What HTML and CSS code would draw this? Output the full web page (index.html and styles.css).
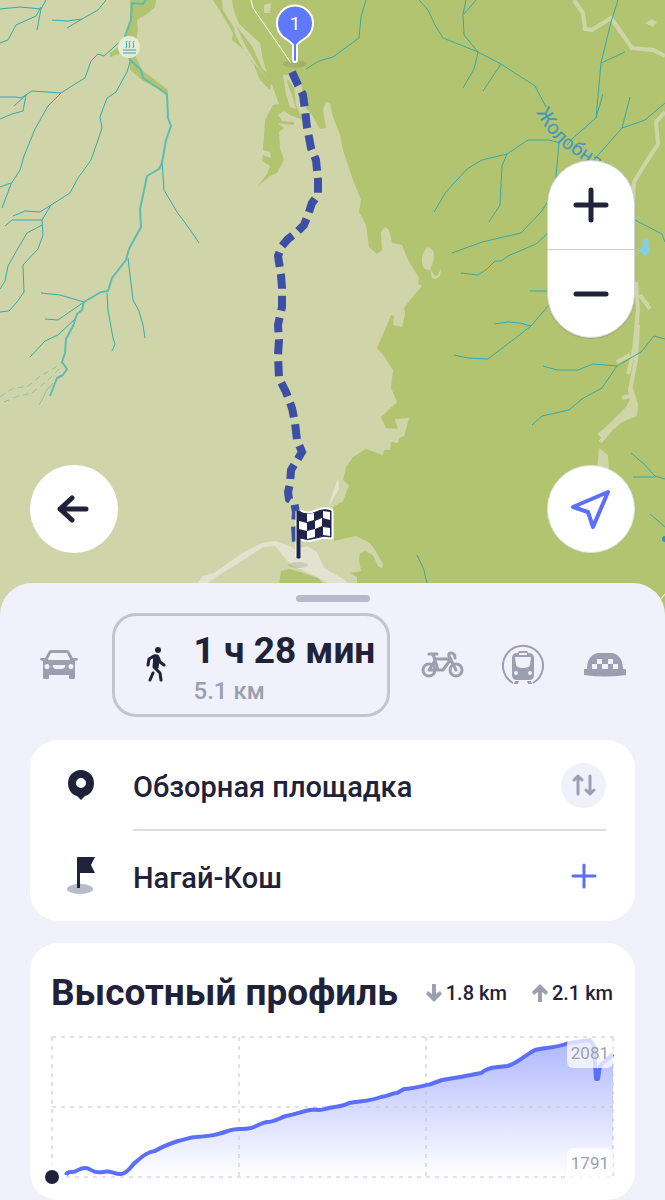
FILE: index.html
```html
<!DOCTYPE html>
<html lang="ru">
<head>
  <meta charset="UTF-8" />
  <meta name="viewport" content="width=device-width, initial-scale=1.0"/>
  <title>Пеший маршрут</title>
  <link rel="stylesheet" href="styles.css">
</head>
<body>
  <main class="app">
    <!-- Map -->
    <section class="map" aria-label="Карта">
      <svg class="map-canvas" viewBox="0 0 665 624" preserveAspectRatio="xMidYMin slice" aria-hidden="true">
        <rect class="land" width="665" height="624"/>

        <!-- Forest -->
        <g class="forest">
          <path d="M232 0H665V624H357V577L350 573 361 571 359 560 360 553 365 551 373 555 378 566 382 568 383 564 375 550 370 543 356 536 334 541 333 507 343 501 349 485 343 480 346 467 353 457 366 449 383 455 384 450 390 450 391 442 398 443 399 438 404 436 409 418 395 419 398 429 386 428 381 417 397 402 391 388 393 370 384 356 377 348 387 325 391 315 394 316 393 325 402 327 405 314 404 308 410 300 422 286 418 284 419 278 408 260 402 245 392 243 389 230 385 227 381 232 382 250 377 254 369 247 366 225 359 212 361 200 353 180 343 150 340 135 333 117 330 103 326 102 323 110 326 128 320 129 312 115 306 108 303 98 301 82 292 72 288 74 287 78 294 88 296 105 303 120 290 115 284 111 278 115 282 121 294 122 294 125 277 123 284 128 279 132 280 148 284 160 277 173 270 176 258 186 267 174 270 166 262 161 263 155 271 158 270 152 263 150 264 135 265 120 273 105 279 104 272 85 257 65 245 45 236 25Z"/>
          <path d="M213 0 222 14 233 33 232 40 244 50 254 65 260 80 270 90 271 83 260 70 246 54 236 36 234 28 223 10 222 0Z"/>
          <path d="M130 0H156L155 7 147 14 137 20 138 30 136 40 135 55 142 70 158 82 168 90 167 96 157 88 142 80 130 70 128 50 111 57 109 54 122 44 130 20Z"/>
          <path d="M281 571 289 569 300 572 318 578 324 584H279Z"/>
        </g>

        <!-- Clearings inside the forest -->
        <g class="land">
          <path d="M223 0H230L239 24 260 43 263 60 267 73 262 68 252 46 238 28Z"/>
          <path d="M283 75 288 75 287 82 292 95 296 109 290 107 286 94Z"/>
          <path d="M264 5 271 3 270 13 264 13Z"/>
          <path d="M422 261C422 251 427 246 430 248C436 252 434 258 432 265L430 270C424 270 422 266 422 261ZM430 269 434 275 437 276 441 269 440 276 436 279 432 278Z"/>
          <path d="M645 23 652 19 657 22 653 27Z"/>
        </g>
        <g class="gully">
          <path d="M574 0 583 13 585 29 592 30 611 18 632 48 653 50 665 56"/>
          <path d="M665 112 656 122 658 144 645 164 634 182 632 218M636 282 638 310 634 350 628 374"/>
          <path d="M638 325 636 360 630 390 634 410 612 428 600 442M617 362 630 355M640 295 650 309M622 398 630 396"/>
        </g>
        <path class="land" d="M632 385 638 404 637 416 617 424 604 440 597 434 607 426 626 407 631 398ZM599 448 608 455 609 470H597Z"/>

        <!-- Dry ground near the finish -->
        <g class="sand">
          <path d="M195 586 203 576 214 573 244 552 262 543 276 541 292 547 300 558 290 560 275 546 263 547 245 559 216 577 205 585ZM275 546 293 550 307 546 317 552 324 568 345 580 350 586H334L317 577 291 565Z"/>
          <path d="M328 508 338 478 339 489 333 499Z"/>
        </g>

        <!-- Streams -->
        <g class="stream">
          <path d="M0 9 20 7 41 9 46 0M41 9 37 30M0 43 8 40 16 25 36 16 41 7M52 20 68 21 82 19 98 10 106 0M67 28 82 19"/>
          <path d="M124 38 104 56 98 54 91 61 85 78 75 84 61 93 32 91 21 98 16 97 0 97M61 93 48 106 35 129 24 156 20 170 11 184 2 208M0 187 11 183M14 106 26 95 23 111 12 114 0 119"/>
          <path d="M130 62 127 72 116 92 107 98 100 117 102 128 98 140 91 160 78 178 70 193 51 205 42 220 43 235 38 249 23 265 24 292 17 302 9 311 0 312"/>
          <path d="M13 216 25 211 40 212 51 205M5 226 12 220 42 220M42 225 27 233 17 250 8 266 5 281 0 289"/>
          <path d="M162 160 164 190 177 212 191 231 199 243M128 258 133 300 139 311 143 325 145 338M107 293 108 310 113 338 115 344 112 351M41 293 60 295 84 302M45 319 58 320 84 302M30 357 45 341 58 335 75 319"/>
          <path d="M306 69 319 61 333 57 359 38 361 17 366 0M419 0 428 10 435 25 443 38 478 52 501 64 535 86 546 107M466 0 463 14 464 35 478 52 474 69 463 88M464 14 476 0M501 64 483 91"/>
          <path d="M618 0 611 22 601 63 596 118 573 138 567 145M601 63 625 52M596 118 603 94M592 162 622 128 645 120 665 103M622 128 630 97"/>
          <path d="M560 143 549 140 528 140 507 154 482 160 467 169 446 192 434 212M507 154 502 166 500 205 489 222M559 142 556 177 547 203 541 212 521 233 482 242 452 253M548 233 536 244 508 256 501 261 495 261 487 269 478 275 461 273M530 291H552"/>
          <path d="M548 306 531 326 488 359 468 358 454 355M494 324 508 322 520 323 531 326M665 339 654 336 641 352 617 366 602 388 582 399 569 410 542 416 532 425M617 366 593 364 578 370 557 370 543 366M631 453 644 464 655 476 665 479M633 477H655M650 514 665 527M417 555 424 570 427 584M635 220 662 234 665 242"/>
        </g>
        <g class="stream stream-dry">
          <path d="M0 397 12 389 28 386 39 377 61 364M4 402 18 396 32 393 48 380 61 367"/>
        </g>
        <path class="stream-side" d="M39 405 44 396 46 391 53 383"/>
        <path class="river" d="M146 0 143 4 132 3 131 20 125 36 130 60 141 70 143 78 158 88 167 94 168 118 171 126 166 140 162 163 159 169 147 176 143 195 140 209 141 227 129 249 126 260 112 278 108 291 101 292 84 302 82 310 77 314 73 326 66 339 65 353 62 362 67 369 63 375 57 378 50 396"/>
        <path class="pond" d="M643 239 648 238 649 252 645 256 638 250 642 248Z"/>
        <path class="road" d="M251 0 253 8 291 63M660 600 665 594"/>
        <circle class="spot" cx="665" cy="539" r="3"/>

        <path id="river-name" d="M536 112C546 130 554 142 572 153L620 184" fill="none"/>
        <text class="river-label"><textPath href="#river-name">Жолобная</textPath></text>

        <!-- Hot spring -->
        <circle class="spring-bg" cx="129" cy="47" r="11"/>
        <path class="spring" d="M127 41c-2 2 1 4-1 7M130 41c-2 2 1 4-1 7M134 41c-2 2 1 4-1 7M123 50H136M123 53H136"/>

        <!-- Route -->
        <ellipse class="shadow" cx="295" cy="64" rx="12" ry="4"/>
        <ellipse class="shadow" cx="298" cy="565" rx="10" ry="3"/>
        <path class="route" d="M292 72 298 85 303 95 305 110 307 127 311 148 316 160 318 180 318 195 312 203 308 215 304 225 297 232 288 239 282 246 278 256 281 275 282 288 282 307 278 325 279 340 278 355 279 378 286 392 292 408 295 423 297 440 302 452 296 462 291 470 290 484 288 492 289 499 294 502 296 512 295 525 296 543"/>
        <path class="start-pin" d="M293 60V45C292 43 289 41 286 39A18 18 0 1 1 304 39C301 41 298 43 297 45V60A2 2 0 0 1 293 60Z"/>
        <text class="start-number" x="295" y="30">1</text>

        <g class="finish">
          <path class="finish-edge" d="M298 511V557M300 512Q308 516 316 512T331 511V537Q324 535 316 538T300 538Z"/>
          <path class="finish-dark" d="M297 511H300V558H297Z"/>
          <path class="finish-dark" d="M300 512Q308 516 316 512T331 511V537Q324 535 316 538T300 538Z"/>
          <path class="finish-light" d="M307 514 314 513V520L307 522ZM323 511 330 512V520L323 518ZM299 521 307 523V531L299 529ZM315 521 322 518V526L315 529ZM307 531 315 529V537L307 539ZM323 527 330 528V536L323 535Z"/>
        </g>
      </svg>

      <div class="zoom-box">
        <button class="zoom-btn" type="button" aria-label="Приблизить">
          <svg width="36" height="36" viewBox="0 0 36 36"><path d="M18 3V33M3 18H33"/></svg>
        </button>
        <button class="zoom-btn" type="button" aria-label="Отдалить">
          <svg width="36" height="36" viewBox="0 0 36 36"><path d="M3 18H33"/></svg>
        </button>
      </div>
      <button class="round-btn back-btn" type="button" aria-label="Назад">
        <svg width="34" height="34" viewBox="0 0 34 34"><path d="M29 17H3M15 6 3 17 15 28"/></svg>
      </button>
      <button class="round-btn locate-btn" type="button" aria-label="Моё местоположение">
        <svg width="44" height="44" viewBox="0 0 44 44"><path d="M4 20 39 5 24 40 19 25Z"/></svg>
      </button>
    </section>

    <!-- Bottom sheet -->
    <section class="sheet">
      <div class="handle"></div>

      <nav class="modes" aria-label="Способ передвижения">
        <button class="mode-btn" type="button" aria-label="Автомобиль">
          <svg width="40" height="30" viewBox="0 0 40 30">
            <path fill-rule="evenodd" d="M9 1Q10 0 12 0H26Q28 0 29 1L33 8H37Q38 8 38 10L35 11V28Q35 29 34 29H30Q29 29 29 28V25H9V28Q9 29 8 29H4Q3 29 3 28V11L0 10Q0 8 1 8H5ZM11 3 8 9Q8 10 9 10H29Q30 10 30 9L27 3ZM7 14A2 2 0 1 0 7 19A2 2 0 1 0 7 14ZM31 14A2 2 0 1 0 31 19A2 2 0 1 0 31 14ZM13 15Q12 15 13 17Q14 19 16 19H22Q24 19 25 17Q26 15 25 15Z"/>
          </svg>
        </button>

        <button class="mode-btn mode-active" type="button" aria-pressed="true">
          <svg width="20" height="36" viewBox="0 0 20 36">
            <circle cx="12" cy="3" r="3"/>
            <path d="M8 9 3 12 2 18M9 9 8 20 14 26 15 33M12 10 14 15 18 18M7 26 4 33"/>
            <path class="body" d="M8 8H12L13 13 12 21H8Z"/>
          </svg>
          <span class="mode-text">
            <span class="mode-time">1 ч 28 мин</span>
            <span class="mode-length">5.1 км</span>
          </span>
        </button>

        <button class="mode-btn" type="button" aria-label="Велосипед">
          <svg class="line-icon" width="44" height="28" viewBox="-1 0 44 28">
            <circle cx="8" cy="19" r="6"/><circle cx="35" cy="19" r="6"/>
            <path d="M8 19 15 8H30L22 19H17L12 3M8 3H16M8 19H15M35 19 28 5Q27 2 30 2Q34 2 34 7"/>
          </svg>
        </button>
        <button class="mode-btn" type="button" aria-label="Метро">
          <svg width="44" height="44" viewBox="0 0 44 44">
            <path class="ring" d="M12 40A20 20 0 1 1 32 40"/>
            <path fill-rule="evenodd" d="M11 15Q11 10 17 10L18 8H26L27 10Q33 10 33 15V32Q33 37 28 37H16Q11 37 11 32ZM14 14 15 22Q16 25 22 25T29 22L30 14ZM15 28A2 2 0 1 0 15 32A2 2 0 1 0 15 28ZM29 28A2 2 0 1 0 29 32A2 2 0 1 0 29 28ZM18 10V12H26V10Z"/>
            <path d="M14 38H18L17 41H13ZM26 38H30L31 41H27Z"/>
          </svg>
        </button>
        <button class="mode-btn" type="button" aria-label="Такси">
          <svg width="42" height="26" viewBox="0 0 42 26">
            <path d="M3 17C3 6 9 1 15 1H27C33 1 39 6 39 17H41Q42 17 42 18V23Q21 26 0 23V18Q0 17 1 17Z"/>
            <path class="checks" d="M8 12H13V17H8ZM13 7H18V12H13ZM18 12H24V17H18ZM24 7H29V12H24ZM29 12H34V17H29Z"/>
          </svg>
        </button>
      </nav>

      <ul class="card points">
        <li class="point">
          <span class="point-icon">
            <svg width="28" height="32" viewBox="0 0 28 32">
              <path fill-rule="evenodd" d="M14 31 10 27C5 26 1 21 1 14A13 13 0 0 1 27 14C27 21 23 26 18 27ZM14 9A5 5 0 1 0 14 19A5 5 0 1 0 14 9Z"/>
            </svg>
          </span>
          <span class="point-name">Обзорная площадка</span>
          <button class="point-btn swap-btn" type="button" aria-label="Поменять местами">
            <svg width="24" height="24" viewBox="0 0 24 24"><path d="M6 21V3M2 7 6 3 10 7M18 3V21M14 17 18 21 22 17"/></svg>
          </button>
        </li>
        <li class="point">
          <span class="point-icon">
            <svg width="28" height="38" viewBox="0 0 28 38">
              <ellipse class="flag-base" cx="13" cy="32" rx="13" ry="5"/>
              <path d="M10 1Q10 0 11 0H28L24 8 28 16H13V31H10Z"/>
            </svg>
          </span>
          <span class="point-name">Нагай-Кош</span>
          <button class="point-btn add-btn" type="button" aria-label="Добавить точку">
            <svg width="26" height="26" viewBox="0 0 26 26"><path d="M13 2V24M2 13H24"/></svg>
          </button>
        </li>
      </ul>

      <section class="card profile">
        <header class="profile-head">
          <h2 class="profile-title">Высотный профиль</h2>
          <span class="climb">
            <svg width="16" height="20" viewBox="0 0 16 20"><path d="M6 1H10V11L14 8 16 11 8 19 0 11 2 8 6 11Z"/></svg>
            1.8 km
          </span>
          <span class="climb">
            <svg width="16" height="20" viewBox="0 0 16 20"><path d="M6 19H10V9L14 12 16 9 8 1 0 9 2 12 6 9Z"/></svg>
            2.1 km
          </span>
        </header>

        <div class="chart">
          <svg class="chart-canvas" viewBox="0 0 562 142" aria-hidden="true">
            <defs>
              <linearGradient id="fill" x1="0" y1="0" x2="0" y2="1">
                <stop offset="0" stop-color="#5b6ffb" stop-opacity="0.5"/>
                <stop offset="1" stop-color="#5b6ffb" stop-opacity="0"/>
              </linearGradient>
            </defs>
            <path fill="url(#fill)" d="M15 137 22 136 31 132 40 136 55 135 66 138 74 134 80 128 92 119 103 115 115 109 127 105 142 102 161 99 178 95 200 92 213 87 222 85 230 81 245 77 257 74 270 73 285 70 298 66 330 62 352 53 380 48 391 44 430 37 440 31 457 29 468 24 484 14 500 11 518 7 540 2 542 10 545 42 549 25 562 20V141H15Z"/>
            <path class="grid" d="M1 1H562M1 71H562M15 141H562M1 1V128M188 1V141M375 1V141M562 1V141"/>
            <path class="curve" d="M15 139Q16 136 20 136C26 137 28 131 35 132C41 133 42 138 52 136C60 134 62 138 70 138C78 137 80 129 86 125C93 119 97 116 104 115C112 110 118 108 127 105C136 103 139 101 145 101C160 100 165 99 177 95C185 92 190 94 200 92C209 89 210 87 216 86C224 86 228 82 235 80C245 78 250 76 259 74C264 73 269 75 274 73C285 70 291 71 298 67C309 65 320 65 330 61C338 60 341 57 346 57L353 53C361 53 368 51 380 48L391 44C404 42 415 40 430 37C436 32 442 31 457 30C468 26 474 19 484 14C493 11 502 13 518 7L539 4 543 10 545 43 547 43 549 30 562 18"/>
            <circle class="chart-dot" cx="1" cy="141" r="7"/>
          </svg>
          <span class="chart-label chart-max">2081</span>
          <span class="chart-label chart-min">1791</span>
        </div>
      </section>
    </section>
  </main>
</body>
</html>
```

FILE: styles.css
```css
* {
  box-sizing: border-box;
}

body {
  margin: 0;
  background: #f0f1fa;
  color: #1f2238;
  font-family: Roboto, "Liberation Sans", sans-serif;
}

button {
  border: none;
  padding: 0;
  background: none;
  color: inherit;
  font-family: inherit;
  cursor: pointer;
}

svg {
  display: block;
}

/* Map */
.map {
  position: relative;
  height: 624px;
  overflow: hidden;
}

.map-canvas {
  width: 100%;
  height: 100%;
}

.land {
  fill: #d0d5a9;
}

.forest {
  fill: #b2c470;
}

.gully {
  fill: none;
  stroke: #d0d5a9;
  stroke-width: 4;
}

.sand {
  fill: #e3e2d0;
}

.stream {
  fill: none;
  stroke: #35aaa8;
  stroke-width: 1;
}

.stream-dry {
  stroke: #8fc0aa;
  stroke-dasharray: 6 4;
}

.stream-side {
  fill: none;
  stroke: #8fc0aa;
  stroke-width: 1;
}

.river {
  fill: none;
  stroke: #5dbbb3;
  stroke-width: 2;
  stroke-linejoin: round;
}

.pond {
  fill: #83d0e4;
}

.spot {
  fill: #358fc0;
}

.road {
  fill: none;
  stroke: #fff;
  stroke-width: 1;
}

.river-label {
  fill: #4597ba;
  font-size: 20px;
}

.spring-bg {
  fill: #e4ecd8;
}

.spring {
  fill: none;
  stroke: #35a5ac;
  stroke-width: 1;
}

.shadow {
  fill: #6b7050;
  opacity: 0.2;
}

.route {
  fill: none;
  stroke: #3d4fa5;
  stroke-width: 8;
  stroke-dasharray: 15 7;
}

.start-pin {
  fill: #6079fb;
  stroke: #fff;
  stroke-width: 2;
}

.start-number {
  fill: #fff;
  font-size: 19px;
  text-anchor: middle;
}

.finish-edge {
  fill: #fff;
  stroke: #fff;
  stroke-width: 5;
  stroke-linejoin: round;
}

.finish-dark {
  fill: #20234a;
  stroke: #20234a;
  stroke-width: 1;
}

.finish-light {
  fill: #fff;
}

.zoom-box {
  position: absolute;
  top: 160px;
  right: 30px;
  width: 88px;
  border: 1px solid #d3d4dc;
  border-radius: 44px;
  background: #fff;
  overflow: hidden;
  box-shadow: 0 1px 1px rgba(31, 34, 56, 0.15);
}

.zoom-btn {
  display: flex;
  align-items: center;
  justify-content: center;
  width: 100%;
  height: 88px;
}

.zoom-btn + .zoom-btn {
  border-top: 1px solid #cdced8;
}

.zoom-btn path,
.back-btn path {
  fill: none;
  stroke: #1f2238;
  stroke-width: 5;
  stroke-linecap: round;
  stroke-linejoin: round;
}

.round-btn {
  position: absolute;
  top: 465px;
  display: flex;
  align-items: center;
  justify-content: center;
  width: 88px;
  height: 88px;
  border-radius: 50%;
  background: #fff;
}

.back-btn {
  left: 30px;
}

.locate-btn {
  right: 30px;
  border: 1px solid #e2e3e6;
}

.locate-btn path {
  fill: none;
  stroke: #5b6ffb;
  stroke-width: 4;
  stroke-linejoin: round;
}

/* Bottom sheet */
.sheet {
  position: relative;
  margin-top: -41px;
  padding: 12px 30px 0;
  border-radius: 32px 32px 0 0;
  background: #f0f1fa;
}

.handle {
  width: 74px;
  height: 7px;
  margin: 0 auto 11px;
  border-radius: 4px;
  background: #b7bac8;
}

.modes {
  display: flex;
  align-items: center;
  justify-content: space-between;
  margin-bottom: 23px;
}

.mode-btn {
  display: flex;
  align-items: center;
  justify-content: center;
  width: 60px;
  height: 104px;
  fill: #9c9fb0;
}

.mode-active {
  justify-content: flex-start;
  gap: 28px;
  width: auto;
  padding: 0 12px 0 31px;
  border: 3px solid #c3c4cf;
  border-radius: 24px;
  fill: #1f2238;
}

.mode-active path {
  fill: none;
  stroke: #1f2238;
  stroke-width: 3;
  stroke-linecap: round;
  stroke-linejoin: round;
}

.mode-active .body {
  fill: #1f2238;
  stroke-width: 1;
}

.mode-text {
  display: flex;
  flex-direction: column;
  padding-top: 8px;
  text-align: left;
}

.mode-time {
  font-size: 37px;
  font-weight: 700;
  line-height: 44px;
}

.mode-length {
  color: #9c9fb0;
  font-size: 24px;
  font-weight: 500;
  line-height: 36px;
}

.line-icon {
  fill: none;
  stroke: #9c9fb0;
  stroke-width: 3;
  stroke-linecap: round;
  stroke-linejoin: round;
}

.ring {
  fill: none;
  stroke: #9c9fb0;
  stroke-width: 2;
}

.checks {
  fill: #f0f1fa;
}

.card {
  margin: 0 0 22px;
  border-radius: 28px;
  background: #fff;
}

.points {
  padding: 0 29px;
  list-style: none;
}

.point {
  display: grid;
  grid-template-columns: 44px 1fr 45px;
  column-gap: 30px;
  align-items: center;
  height: 90px;
}

.point + .point {
  position: relative;
  height: 91px;
}

.point + .point::before {
  content: "";
  position: absolute;
  top: -1px;
  left: 74px;
  right: 0;
  height: 2px;
  background: #dcdce8;
}

.point-icon {
  display: flex;
  justify-content: center;
  fill: #1f2238;
}

.flag-base {
  fill: #b9bbc9;
}

.point-name {
  padding-top: 4px;
  font-size: 29px;
  font-weight: 500;
  line-height: 36px;
}

.point-btn {
  display: flex;
  align-items: center;
  justify-content: center;
  width: 45px;
  height: 45px;
  border-radius: 50%;
}

.point-btn path {
  fill: none;
  stroke-width: 3;
  stroke-linecap: round;
  stroke-linejoin: round;
}

.swap-btn {
  background: #f0f1fa;
}

.swap-btn path {
  stroke: #9c9fb0;
}

.add-btn path {
  stroke: #5b6ffb;
}

/* Elevation profile */
.profile {
  margin-bottom: 0;
  padding: 27px 22px 22px 21px;
}

.profile-head {
  display: flex;
  align-items: center;
  gap: 25px;
  margin-bottom: 21px;
}

.profile-title {
  flex: 1;
  margin: 0;
  font-size: 37px;
  font-weight: 700;
  line-height: 45px;
  white-space: nowrap;
}

.climb {
  display: flex;
  align-items: center;
  gap: 4px;
  font-size: 20px;
  font-weight: 500;
  white-space: nowrap;
}

.climb svg {
  fill: #9c9fb0;
}

.chart {
  position: relative;
}

.chart-canvas {
  width: 100%;
  overflow: visible;
}

.grid {
  fill: none;
  stroke: #c3c4d0;
  stroke-width: 1;
  stroke-dasharray: 4 5;
}

.curve {
  fill: none;
  stroke: #5b6ffb;
  stroke-width: 4;
  stroke-linejoin: round;
}

.chart-dot {
  fill: #1f2238;
}

.chart-label {
  position: absolute;
  right: 0;
  padding: 0 4px;
  border-radius: 6px;
  background: rgba(255, 255, 255, 0.75);
  color: #9c9fb0;
  font-size: 17px;
  line-height: 30px;
}

.chart-max {
  top: 2px;
}

.chart-min {
  bottom: 0;
}
```
